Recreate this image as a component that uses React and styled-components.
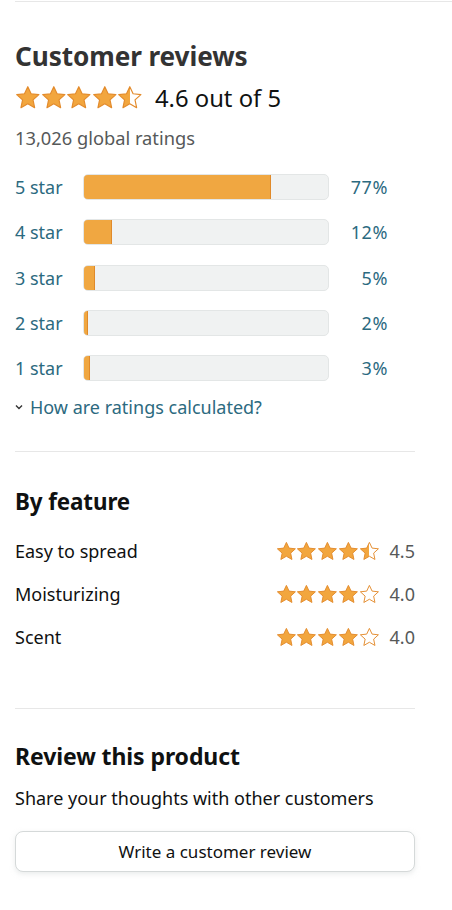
import React, { useId } from "react";
import styled, { createGlobalStyle } from "styled-components";

const Global = createGlobalStyle`
  html, body { margin: 0; padding: 0; background: #fff; }
  body { font-family: "Noto Sans", Arial, sans-serif; color: #0f1111; }
`;

const Page = styled.div`
  padding: 1px 0 40px 15px;
`;

const TopRule = styled.div`
  height: 1px;
  background: #e7e7e7;
`;

const Column = styled.div`
  width: 400px;
`;

const Section = styled.section`
  display: flex;
  flex-direction: column;
`;

const Title = styled.h2`
  margin: ${(p) => p.$mt || 0}px 0 0;
  font-size: ${(p) => p.$size || 22}px;
  line-height: 32px;
  font-weight: 700;
  color: ${(p) => p.$color || "#0f1111"};
  letter-spacing: -0.1px;
`;

const RatingRow = styled.div`
  display: flex;
  align-items: center;
  gap: 12px;
  margin-top: 12px;
  height: 28px;
`;

const Stars = styled.div`
  display: flex;
  gap: ${(p) => p.$gap}px;
`;

const Score = styled.span`
  font-size: 23.8px;
  line-height: 28px;
  color: #0f1111;
`;

const Muted = styled.div`
  margin-top: 16px;
  font-size: 18.3px;
  line-height: 20px;
  color: #565959;
`;

const Histogram = styled.div`
  display: flex;
  flex-direction: column;
  gap: 19.3px;
  margin-top: 26px;
`;

const HistRow = styled.div`
  display: grid;
  grid-template-columns: 68px 246px 59px;
  align-items: center;
  height: 26px;
`;

const LinkText = styled.span`
  font-size: 18px;
  line-height: 20px;
  color: #2c6a7f;
`;

const Pct = styled(LinkText)`
  text-align: right;
  letter-spacing: 0.6px;
`;

const Track = styled.div`
  height: 26px;
  box-sizing: border-box;
  background: #f0f2f2;
  border: 1px solid #e3e6e6;
  border-radius: 5px;
  overflow: hidden;
  display: flex;
`;

const Fill = styled.div`
  box-sizing: border-box;
  background: #f0a741;
  border: 1px solid #e08a2a;
  border-radius: 4px 0 0 4px;
  margin: -1px 0 0 -1px;
  height: calc(100% + 2px);
  min-width: 4px;
`;

const Expander = styled.div`
  display: flex;
  align-items: center;
  gap: 7px;
  margin-top: 16px;
  height: 20px;
`;

const Divider = styled.hr`
  border: 0;
  border-top: 1px solid #e7e7e7;
  margin: ${(p) => p.$mt}px 0 0;
  width: 400px;
`;

const FeatureList = styled.div`
  display: flex;
  flex-direction: column;
  gap: 19px;
  margin-top: 21px;
`;

const FeatureRow = styled.div`
  display: flex;
  align-items: center;
  justify-content: space-between;
  height: 24px;
`;

const FeatureLabel = styled.span`
  font-size: 18px;
  line-height: 24px;
  color: #0f1111;
`;

const FeatureScore = styled.div`
  display: flex;
  align-items: center;
  gap: 10px;
`;

const FeatureValue = styled.span`
  font-size: 18px;
  line-height: 24px;
  color: #565959;
`;

const Body = styled.p`
  margin: 14px 0 0;
  font-size: 18px;
  line-height: 24px;
  color: #0f1111;
`;

const Button = styled.button`
  margin-top: 21px;
  width: 400px;
  height: 41px;
  border: 1px solid #d5d9d9;
  border-radius: 8px;
  background: #fff;
  box-shadow: 0 2px 5px rgba(213, 217, 217, 0.5);
  font-family: inherit;
  font-size: 17px;
  color: #0f1111;
  cursor: pointer;
`;

const STAR =
  "M12 1.6 L15.1 8.2 L22.4 9 L16.9 14 L18.4 21.3 L12 17.6 L5.6 21.3 L7.1 14 L1.6 9 L8.9 8.2 Z";

function Star({ fill, size }) {
  const id = useId();
  return (
    <svg width={size} height={size} viewBox="0 0 24 24">
      <defs>
        <linearGradient id={id} x1="0" x2="1" y1="0" y2="0">
          <stop offset={fill} stopColor="#f2a63e" />
          <stop offset={fill} stopColor="#ffffff" />
        </linearGradient>
      </defs>
      <path
        d={STAR}
        fill={`url(#${id})`}
        stroke="#e38b2c"
        strokeWidth="1.1"
        strokeLinejoin="round"
      />
    </svg>
  );
}

function StarRating({ value, size, gap }) {
  return (
    <Stars $gap={gap}>
      {[0, 1, 2, 3, 4].map((i) => {
        const f = Math.max(0, Math.min(1, value - i));
        const frac = f >= 0.75 ? 1 : f >= 0.25 ? 0.5 : 0;
        return <Star key={i} fill={frac} size={size} />;
      })}
    </Stars>
  );
}

const hist = [
  ["5 star", 77],
  ["4 star", 12],
  ["3 star", 5],
  ["2 star", 2],
  ["1 star", 3],
];

const features = [
  ["Easy to spread", 4.5, "4.5"],
  ["Moisturizing", 4.0, "4.0"],
  ["Scent", 4.0, "4.0"],
];

export default function App() {
  return (
    <>
      <Global />
      <Page>
        <TopRule />
        <Column>
          <Section>
            <Title $mt={38} $size={26.2} $color="#333333">
              Customer reviews
            </Title>
            <RatingRow>
              <StarRating value={4.6} size={25.6} gap={0} />
              <Score>4.6 out of 5</Score>
            </RatingRow>
            <Muted>13,026 global ratings</Muted>
            <Histogram>
              {hist.map(([label, pct]) => (
                <HistRow key={label}>
                  <LinkText>{label}</LinkText>
                  <Track>
                    <Fill style={{ width: `${pct}%` }} />
                  </Track>
                  <Pct>{pct}%</Pct>
                </HistRow>
              ))}
            </Histogram>
            <Expander>
              <svg width="8" height="6" viewBox="0 0 8 6">
                <polyline
                  points="1,1.5 4,4.5 7,1.5"
                  fill="none"
                  stroke="#333"
                  strokeWidth="1.4"
                />
              </svg>
              <LinkText>How are ratings calculated?</LinkText>
            </Expander>
          </Section>
          <Divider $mt={34} />
          <Section>
            <Title $mt={34} $size={22.4}>
              By feature
            </Title>
            <FeatureList>
              {features.map(([label, v, text]) => (
                <FeatureRow key={label}>
                  <FeatureLabel>{label}</FeatureLabel>
                  <FeatureScore>
                    <StarRating value={v} size={20.8} gap={0} />
                    <FeatureValue>{text}</FeatureValue>
                  </FeatureScore>
                </FeatureRow>
              ))}
            </FeatureList>
          </Section>
          <Divider $mt={59} />
          <Section>
            <Title $mt={31} $size={23}>
              Review this product
            </Title>
            <Body>Share your thoughts with other customers</Body>
            <Button>Write a customer review</Button>
          </Section>
        </Column>
      </Page>
    </>
  );
}
